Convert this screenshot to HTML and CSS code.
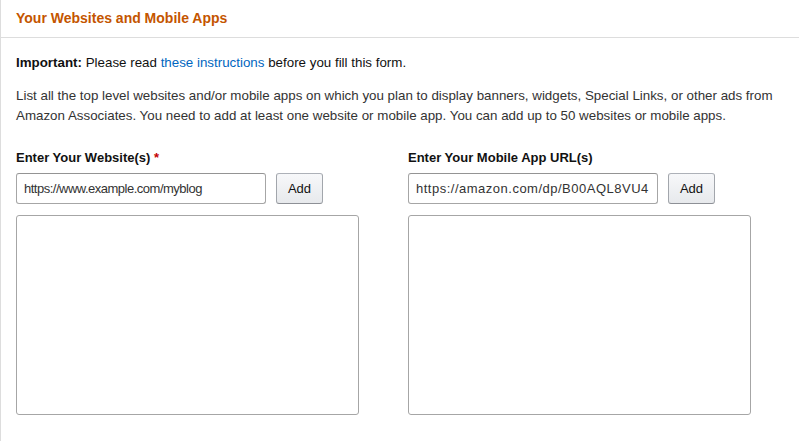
FILE: index.html
```html
<!DOCTYPE html>
<html lang="en">
<head>
<meta charset="utf-8">
<title>Your Websites and Mobile Apps</title>
<link rel="stylesheet" href="styles.css">
</head>
<body>
<section class="panel">
  <header class="panel-head">
    <h2 class="panel-title">Your Websites and Mobile Apps</h2>
  </header>
  <div class="panel-body">
    <p class="note"><strong>Important:</strong> Please read <a href="#" class="link">these instructions</a> before you fill this form.</p>
    <p class="desc">List all the top level websites and/or mobile apps on which you plan to display banners, widgets, Special Links, or other ads from<br>Amazon Associates. You need to add at least one website or mobile app. You can add up to 50 websites or mobile apps.</p>
    <div class="columns">
      <div class="col">
        <label class="field-label">Enter Your Website(s) <span class="req">*</span></label>
        <div class="add-row">
          <input class="text-input text-input--site" type="text" placeholder="https://www.example.com/myblog">
          <button class="btn" type="button">Add</button>
        </div>
        <textarea class="list-box"></textarea>
      </div>
      <div class="col">
        <label class="field-label">Enter Your Mobile App URL(s)</label>
        <div class="add-row">
          <input class="text-input text-input--app" type="text" placeholder="https://amazon.com/dp/B00AQL8VU4">
          <button class="btn" type="button">Add</button>
        </div>
        <textarea class="list-box"></textarea>
      </div>
    </div>
  </div>
</section>
</body>
</html>
```

FILE: styles.css
```css
* { box-sizing: border-box; }
html, body { margin: 0; padding: 0; background: #fff; }
body {
  font-family: "Liberation Sans", Arial, sans-serif;
  font-size: 13.35px;
  color: #111;
}
.panel {
  border-left: 1px solid #dddddd;
  min-height: 441px;
}
.panel-head {
  height: 38px;
  border-bottom: 1px solid #dddddd;
  padding: 0 15px;
  display: flex;
  align-items: center;
}
.panel-title {
  margin: 0;
  font-size: 14px;
  font-weight: 700;
  color: #c45500;
  line-height: 20px;
  padding-bottom: 1px;
}
.panel-body {
  padding: 15px 15px 0;
}
.note {
  margin: 0;
  line-height: 19px;
}
.note strong { font-weight: 700; }
.link { color: #0066c0; text-decoration: none; }
.desc {
  margin: 14px 0 0;
  line-height: 20px;
  color: #333;
  white-space: nowrap;
}
.columns {
  display: grid;
  grid-template-columns: 343px 343px;
  column-gap: 49px;
  margin-top: 22px;
}
.col { display: flex; flex-direction: column; }
.field-label {
  font-size: 13px;
  font-weight: 700;
  line-height: 20px;
  margin-bottom: 5px;
}
.req { color: #c40000; }
.add-row {
  display: flex;
  gap: 10px;
  align-items: stretch;
}
.text-input {
  width: 250px;
  height: 31px;
  border: 1px solid #a6a6a6;
  border-top-color: #949494;
  border-radius: 3px;
  padding: 0 7px;
  font: inherit;
  font-size: 13px;
  color: #111;
  background: #fff;
  outline: none;
}
.text-input--site { letter-spacing: -0.5px; }
.text-input--app { letter-spacing: 0.5px; }
.text-input::placeholder { color: #333; opacity: 1; }
.btn {
  width: 47px;
  height: 31px;
  border: 1px solid #adb1b8;
  border-color: #adb1b8 #a2a6ac #8d9096;
  border-radius: 3px;
  background: linear-gradient(to bottom, #f7f8fa, #e7e9ec);
  font: inherit;
  font-size: 13px;
  color: #111;
  padding: 0;
}
.list-box {
  margin-top: 11px;
  width: 343px;
  height: 200px;
  border: 1px solid #a6a6a6;
  border-radius: 3px;
  resize: none;
  background: #fff;
  font: inherit;
}
```
